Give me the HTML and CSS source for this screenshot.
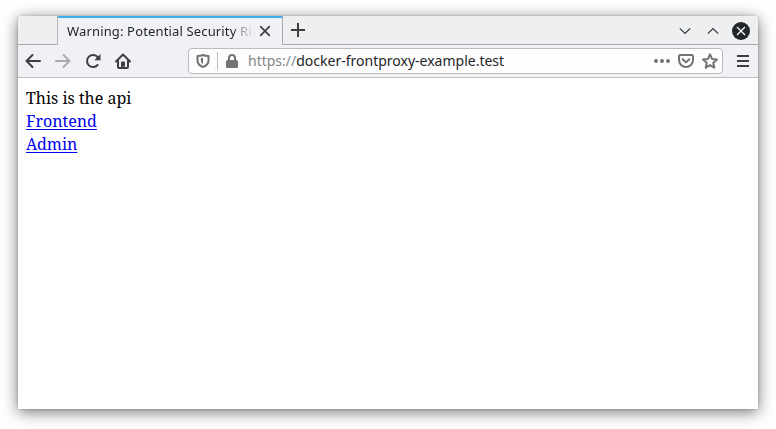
FILE: index.html
```html
<!DOCTYPE html>
<html lang="en">
<head>
<meta charset="utf-8">
<title>docker-frontproxy-example.test</title>
<link rel="stylesheet" href="styles.css">
</head>
<body>
<div class="window">
  <header class="tabs">
    <div class="lead"></div>
    <div class="tab">
      <span class="tab-title">Warning: Potential Security Ris</span>
      <svg class="tab-close" width="12" height="12" viewBox="0 0 12 12"><path d="M1.700 1.700l8.600 8.600M10.300 1.700L1.700 10.300"/></svg>
    </div>
    <div class="strip">
      <svg class="plus" width="16" height="16" viewBox="0 0 16 16"><path d="M8 1v14M1 8h14"/></svg>
      <div class="controls">
        <svg width="12" height="8" viewBox="0 0 12 8"><path d="M.8 1.300L6 6.500l5.200-5.200"/></svg>
        <svg width="12" height="8" viewBox="0 0 12 8"><path d="M.8 6.700L6 1.500l5.200 5.200"/></svg>
        <svg class="quit" width="18" height="18" viewBox="0 0 18 18"><circle cx="9" cy="9" r="9"/><path d="M5 5l8 8M13 5l-8 8"/></svg>
      </div>
    </div>
  </header>
  <nav class="toolbar">
    <div class="buttons">
      <svg width="16" height="16" viewBox="0 0 16 16"><path d="M15 8H1.500M7.500 2l-6 6 6 6"/></svg>
      <svg class="disabled" width="16" height="16" viewBox="0 0 16 16"><path d="M1 8h13.500M8.500 2l6 6-6 6"/></svg>
      <svg width="16" height="16" viewBox="0 0 16 16"><path d="M12.600 12A6 6 0 1 1 12.800 4.400"/><path class="solid" d="M15.500 1v6.200H9.300z"/></svg>
      <svg width="16" height="16" viewBox="0 0 16 16"><path d="M1 8.500L8 1.500l7 7M3 7.500V14a1 1 0 0 0 1 1h8a1 1 0 0 0 1-1V7.500"/><path class="solid" d="M6 15V9.500Q6 8.500 7 8.500h2q1 0 1 1V15H8.700v-2H8v2z"/></svg>
    </div>
    <div class="address">
      <svg width="14" height="14" viewBox="0 0 14 14"><path d="M7 1C5.500 1.700 3.500 2 1.500 2v4.500C1.500 10 4 12 7 13c3-1 5.500-3 5.500-6.500V2C10.500 2 8.500 1.700 7 1z"/><path class="solid" d="M7 3.800v6.500C5.500 9 4.800 8 4.800 6.500V4.300c.8 0 1.500-.2 2.200-.5z"/></svg>
      <i class="divider"></i>
      <svg class="lock" width="12" height="14" viewBox="0 0 12 14"><path d="M3 7V4a3 3 0 0 1 6 0v3"/><rect x="0" y="6" width="12" height="8" rx="1.500"/></svg>
      <span class="url"><span class="scheme">https://</span>docker-frontproxy-example.test</span>
      <div class="actions">
        <svg width="16" height="16" viewBox="0 0 16 16"><g class="solid"><circle cx="2" cy="8" r="2"/><circle cx="8" cy="8" r="2"/><circle cx="14" cy="8" r="2"/></g></svg>
        <svg width="16" height="16" viewBox="0 0 16 16"><path d="M2.200 2h11.600Q15 2 15 3.200V7a7 7 0 0 1-14 0V3.200Q1 2 2.200 2zM4.700 6.200L8 9.400l3.300-3.200"/></svg>
        <svg width="16" height="16" viewBox="0 0 16 16"><path d="M8 1.300l2 4.600 5 .5-3.700 3.400 1 4.900L8 12.200l-4.300 2.500 1-4.900L1 6.400l5-.5z"/></svg>
      </div>
    </div>
    <svg class="menu" width="12" height="12" viewBox="0 0 12 12"><path d="M0 1h12M0 6h12M0 11h12"/></svg>
  </nav>
  <main class="page">
    <div>This is the api</div>
    <div><a href="#">Frontend</a></div>
    <div><a href="#">Admin</a></div>
  </main>
</div>
</body>
</html>
```
FILE: styles.css
```css
* { box-sizing: border-box; }
body { margin: 0; height: 429px; padding: 16px 18px 20px; background: #fff; overflow: hidden; font-family: "Noto Sans", sans-serif; }
svg { display: block; flex: none; fill: none; stroke: #3e3e41; stroke-width: 2; stroke-linejoin: round; stroke-linecap: round; }
.window { height: 393px; display: flex; flex-direction: column; background: #fff; border-radius: 3px 3px 0 0; box-shadow: 0 3px 16px rgba(0,0,0,.55), 0 0 3px rgba(0,0,0,.2); }
.tabs { height: 29px; display: flex; background: #eeeff1; border-radius: 3px 3px 0 0; }
.lead { width: 40px; border-right: 1px solid #b4b5b7; border-bottom: 1px solid #a8a9ab; }
.tab { width: 224px; padding: 0 11px 2px 9px; display: flex; align-items: center; justify-content: space-between; border-top: 2px solid #3daee9; background: #f0f1f4; }
.tab-title { width: 192px; overflow: hidden; white-space: nowrap; font-size: 13px; letter-spacing: .15px; line-height: 18px; color: #232629; -webkit-mask-image: linear-gradient(to right, #000 166px, rgba(0,0,0,.45) 174px, transparent 188px); mask-image: linear-gradient(to right, #000 166px, rgba(0,0,0,.45) 174px, transparent 188px); }
.tab-close { stroke-width: 1.7; }
.strip { flex: 1; display: flex; align-items: center; justify-content: space-between; padding: 0 8px 0 7px; border-left: 1px solid #a8a9ab; border-bottom: 1px solid #a8a9ab; }
.plus { stroke-linecap: butt; }
.controls { display: flex; align-items: center; gap: 16px; padding-top: 2px; }
.controls svg { stroke: #31363b; stroke-width: 1.2; stroke-linecap: butt; stroke-linejoin: miter; }
.controls .quit { margin-left: -3px; stroke: #fff; }
.quit circle { fill: #232629; stroke: none; }
.toolbar { height: 33px; display: flex; align-items: center; padding: 0 9px 0 7px; background: #f0f1f4; border-bottom: 1px solid #bcbdbf; }
.buttons { display: flex; gap: 14px; width: 163px; }
.buttons .disabled { stroke: #ababae; }
svg .solid { fill: #3e3e41; stroke: none; }
.address { width: 535px; height: 26px; display: flex; align-items: center; padding: 0 4px 0 7px; background: #fdfdfd; border: 1px solid #b9babd; border-radius: 4px; }
.address svg { stroke: #737373; }
.address svg .solid { fill: #737373; }
.divider { width: 1px; height: 18px; margin: 0 8px 0 7px; background: #bdbdbd; }
.lock rect { fill: #737373; stroke: none; }
.url { margin-left: 10px; font-size: 14px; line-height: 20px; color: #232629; white-space: nowrap; }
.scheme { color: #85878a; }
.actions { display: flex; gap: 8px; margin-left: auto; }
.menu { margin-left: auto; stroke-linecap: butt; }
.page { flex: 1; padding: 9px 8px; font-family: "Noto Serif", "DejaVu Serif Condensed", "Liberation Serif", serif; font-size: 16px; line-height: 23px; color: #000; }
.page a { color: #00e; text-decoration: underline; text-decoration-thickness: 1px; text-underline-offset: 2px; text-decoration-skip-ink: none; }
```
